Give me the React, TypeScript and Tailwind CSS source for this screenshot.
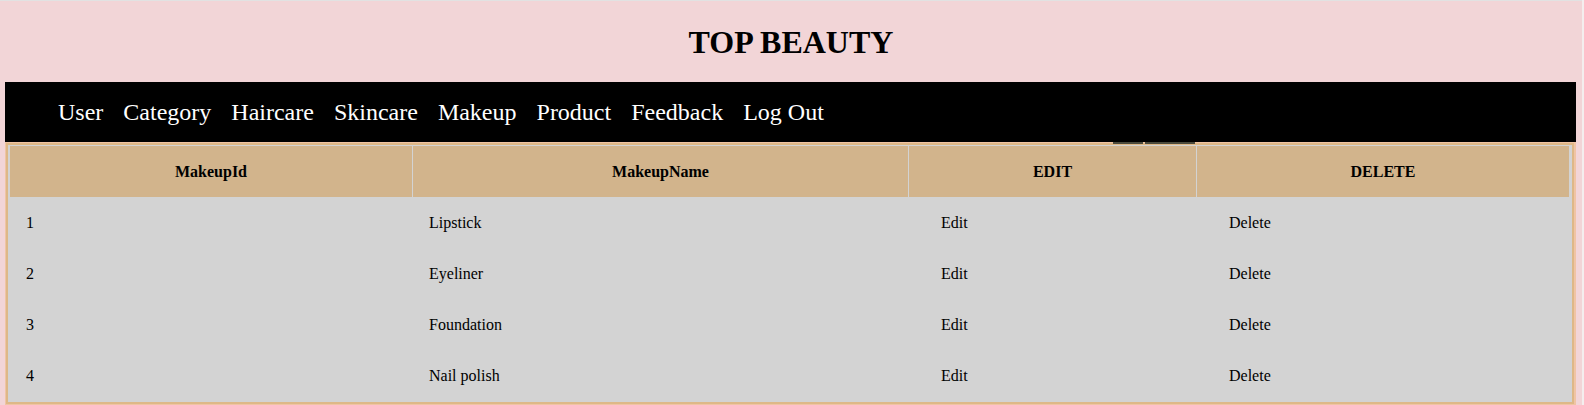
import React from "react";

type Makeup = {
  id: number;
  name: string;
};

const items: Makeup[] = [
  { id: 1, name: "Lipstick" },
  { id: 2, name: "Eyeliner" },
  { id: 3, name: "Foundation" },
  { id: 4, name: "Nail polish" },
];

const links = ["User", "Category", "Haircare", "Skincare", "Makeup", "Product", "Feedback", "Log Out"];

function App() {
  return (
    <div className="w-[1584px] h-[405px] overflow-hidden bg-[#f4eeee] font-['Liberation_Serif',serif] text-black">
      <div className="w-[1582px] h-[405px] bg-[#f2d5d7] border-t border-[#e2e2e2]">
        <h1 className="h-[81px] flex items-center justify-center text-[32px] font-bold leading-none pt-[1px]">
          TOP BEAUTY
        </h1>

        <nav className="ml-[5px] w-[1571px] h-[60px] bg-black flex items-center pl-[43px]">
          {links.map((link) => (
            <a key={link} href="#" className="px-[10px] text-[24px] text-white leading-none">
              {link}
            </a>
          ))}
        </nav>

        <div className="relative ml-[5px] w-[1571px] border border-[#f0c4a4] bg-[#f0c4a4]">
          <div className="absolute -top-[1px] left-[1107px] w-[30px] h-[2px] bg-[#4b4a3c]" />
          <div className="absolute -top-[1px] left-[1139px] w-[50px] h-[2px] bg-[#4b4a3c]" />
          <div className="border-[2px] border-[#deb887] bg-[#d3d3d3] mr-[1px] pl-[1px]">
            <table className="w-[1561px] table-fixed border-collapse text-[16px]">
              <thead>
                <tr className="h-[52px] bg-[#d2b48c]">
                  <th className="w-[403px] border border-[#d3d3d3] font-bold">MakeupId</th>
                  <th className="w-[496px] border border-[#d3d3d3] font-bold">MakeupName</th>
                  <th className="w-[288px] border border-[#d3d3d3] font-bold">EDIT</th>
                  <th className="border border-[#d3d3d3] font-bold">DELETE</th>
                </tr>
              </thead>
              <tbody>
                {items.map((item) => (
                  <tr key={item.id} className="h-[51px]">
                    <td className="border border-[#d3d3d3] pl-[16px]">{item.id}</td>
                    <td className="border border-[#d3d3d3] pl-[16px]">{item.name}</td>
                    <td className="border border-[#d3d3d3] pl-[32px]">Edit</td>
                    <td className="border border-[#d3d3d3] pl-[32px]">Delete</td>
                  </tr>
                ))}
              </tbody>
            </table>
          </div>
        </div>
      </div>
    </div>
  );
}

export default App;
